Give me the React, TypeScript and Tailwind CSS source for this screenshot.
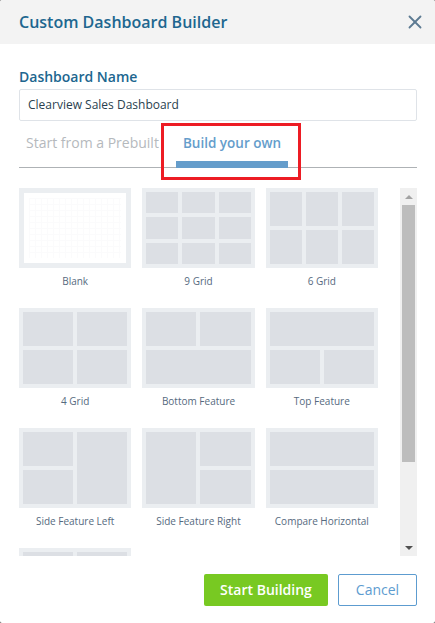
import { X } from "lucide-react";

// spans are written out so tailwind sees them
const layouts: { label: string; cols: string; rows: string; cells: string[] }[] = [
  { label: "9 Grid", cols: "grid-cols-3", rows: "grid-rows-3", cells: ["", "", "", "", "", "", "", "", ""] },
  { label: "6 Grid", cols: "grid-cols-3", rows: "grid-rows-2", cells: ["", "", "", "", "", ""] },
  { label: "4 Grid", cols: "grid-cols-2", rows: "grid-rows-2", cells: ["", "", "", ""] },
  { label: "Bottom Feature", cols: "grid-cols-2", rows: "grid-rows-2", cells: ["", "", "col-span-2"] },
  { label: "Top Feature", cols: "grid-cols-2", rows: "grid-rows-2", cells: ["col-span-2", "", ""] },
  { label: "Side Feature Left", cols: "grid-cols-2", rows: "grid-rows-2", cells: ["", "row-span-2", ""] },
  { label: "Side Feature Right", cols: "grid-cols-2", rows: "grid-rows-2", cells: ["row-span-2", "", ""] },
  { label: "Compare Horizontal", cols: "grid-cols-1", rows: "grid-rows-2", cells: ["", ""] },
  { label: "", cols: "grid-cols-2", rows: "grid-rows-2", cells: ["", "", "", ""] },
];

function Thumb({ label, cols, rows, cells }: { label: string; cols: string; rows: string; cells: string[] }) {
  return (
    <div className="flex flex-col items-center h-[120px]">
      <div className={`grid ${cols} ${rows} gap-1 p-1 w-full h-20 shrink-0 bg-[#ebeef1]`}>
        {cells.map((c, i) => (
          <div key={i} className={`bg-[#dcdfe4] ${c}`} />
        ))}
      </div>
      <div className="h-[26px] text-[10px] leading-[26px] text-[#566a80] whitespace-nowrap">{label}</div>
    </div>
  );
}

function BlankThumb() {
  return (
    <div className="flex flex-col items-center h-[120px]">
      <div className="w-full h-20 shrink-0 p-[5px] bg-[#ebeef1]">
        <div className="w-full h-full bg-white p-[5px]">
          <div className="w-full h-full bg-[linear-gradient(#fbfbfc_1px,transparent_1px),linear-gradient(90deg,#fbfbfc_1px,transparent_1px)] bg-[size:6px_6px]" />
        </div>
      </div>
      <div className="h-[26px] text-[10px] leading-[26px] text-[#566a80]">Blank</div>
    </div>
  );
}

export default function App() {
  return (
    <div className="w-[435px] h-[623px] bg-[#555] overflow-hidden font-['Open_Sans',sans-serif]">
      <div className="relative w-full h-full bg-white rounded-[2px] overflow-hidden flex flex-col">
        <header className="h-11 shrink-0 bg-[#f3f3f3] flex items-center justify-between pl-[19px] pr-[9px]">
          <h1 className="text-base font-semibold text-[#20668f]">Custom Dashboard Builder</h1>
          <X className="w-[22px] h-[22px] text-[#5c7a92]" strokeWidth={2} />
        </header>

        <div className="pl-[19px] pr-[18px] pt-[23px] flex flex-col flex-1 min-h-0">
          <label className="text-sm leading-[20px] font-semibold text-[#20668f]">Dashboard Name</label>
          <div className="mt-[2px] h-8 shrink-0 border border-[#dfe3e8] rounded-[2px] flex items-center pl-2 text-xs text-[#2a3f4f]">
            Clearview Sales Dashboard
          </div>

          <div className="mt-[7px] h-10 shrink-0 flex border-b border-[#aeb2b5]">
            <div className="pl-[7px] w-[157px] pt-[5px] text-sm leading-[20px] text-[#b5b9bd] whitespace-nowrap">Start from a Prebuilt</div>
            <div className="w-[112px] border-b-[7px] border-[#659dcb] -mb-px pt-[5px] text-center text-[13.5px] leading-[20px] font-semibold text-[#659dcb] whitespace-nowrap">
              Build your own
            </div>
          </div>

          <div className="mt-5 h-[368px] shrink-0 flex overflow-hidden">
            <div className="w-[359px] grid grid-cols-3 gap-x-[11px] content-start">
              <BlankThumb />
              {layouts.map((l, i) => (
                <Thumb key={i} {...l} />
              ))}
            </div>
            <div className="ml-[22px] w-[17px] flex flex-col items-center bg-[#f0f0f0]">
              <div className="h-[17px] shrink-0 flex items-center justify-center">
                <div className="w-0 h-0 border-x-[4px] border-x-transparent border-b-[4px] border-b-[#a3a3a3]" />
              </div>
              <div className="w-[13px] h-[257px] shrink-0 bg-[#bdbdbd]" />
              <div className="mt-auto h-[17px] shrink-0 flex items-center justify-center">
                <div className="w-0 h-0 border-x-[4px] border-x-transparent border-t-[4px] border-t-[#505050]" />
              </div>
            </div>
          </div>

          <div className="mt-[18px] flex justify-end gap-[10px]">
            <button className="w-[124px] h-8 rounded-[2px] bg-[#78c922] text-sm font-semibold text-white">Start Building</button>
            <button className="w-[79px] h-8 rounded-[2px] border border-[#5d9cd0] text-sm text-[#5d9cd0]">Cancel</button>
          </div>
        </div>

        {/* red highlight drawn over the tab */}
        <div className="absolute left-[161px] top-[123px] w-[140px] h-[57px] border-[3px] border-[#ed1c24] pointer-events-none" />
      </div>
    </div>
  );
}
